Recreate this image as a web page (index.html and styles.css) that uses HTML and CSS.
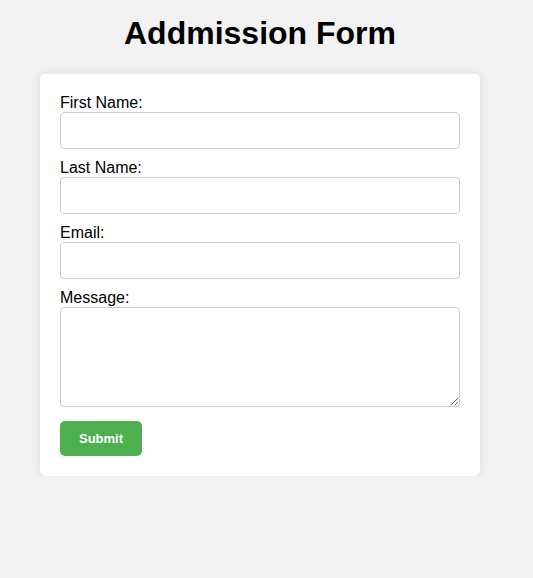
FILE: index.html
```html
<!DOCTYPE html>
<html>
<head>
<meta charset="utf-8">
<link rel="stylesheet" href="styles.css">
</head>
<body>
<div class="page">
  <h1 class="title">Addmission Form</h1>
  <form class="card">
    <label class="field-label" for="first">First Name:</label>
    <input class="field" type="text" id="first">
    <label class="field-label" for="last">Last Name:</label>
    <input class="field" type="text" id="last">
    <label class="field-label" for="email">Email:</label>
    <input class="field" type="email" id="email">
    <label class="field-label" for="msg">Message:</label>
    <textarea class="field area" id="msg"></textarea>
    <button class="submit" type="button">Submit</button>
  </form>
</div>
</body>
</html>
```

FILE: styles.css
```css
html, body {
  margin: 0;
  padding: 0;
  background: #f2f2f2;
  font-family: "Liberation Sans", Arial, sans-serif;
  color: #000;
}
.page {
  width: 440px;
  margin-left: 40px;
  padding-top: 15px;
}
.title {
  margin: 0 0 22px;
  font-size: 32px;
  font-weight: bold;
  line-height: 37px;
  text-align: center;
}
.card {
  background: #fff;
  padding: 20px;
  border-radius: 5px;
  box-shadow: 0 0 10px rgba(0, 0, 0, 0.1);
}
.field-label {
  display: block;
  font-size: 16px;
  line-height: 18px;
}
.field {
  display: block;
  box-sizing: border-box;
  width: 100%;
  height: 37px;
  margin: 0 0 10px;
  padding: 8px;
  border: 1px solid #ccc;
  border-radius: 4px;
  font-family: "Liberation Sans", Arial, sans-serif;
  font-size: 16px;
  background: #fff;
}
.area {
  height: 100px;
  margin-bottom: 14px;
  resize: vertical;
}
.submit {
  display: block;
  height: 35px;
  padding: 0 19px;
  border: none;
  border-radius: 5px;
  background: #4caf50;
  color: #fff;
  font-family: "Liberation Sans", Arial, sans-serif;
  font-size: 13px;
  font-weight: bold;
}
```
